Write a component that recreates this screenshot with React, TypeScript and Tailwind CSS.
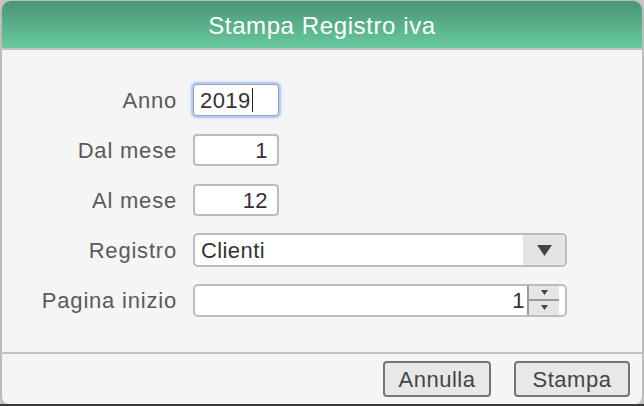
const FONT = { fontFamily: '"Liberation Sans", Arial, sans-serif' };

function Label({ children }: { children: string }) {
  return (
    <div className="w-[191px] pr-[16px] text-right text-[22px] tracking-[0.8px] text-[#5a5a5a]">{children}</div>
  );
}

function Row({ label, children }: { label: string; children: React.ReactNode }) {
  return (
    <div className="flex h-[50px] items-center">
      <Label>{label}</Label>
      {children}
    </div>
  );
}

function Caret() {
  return (
    <svg width="7" height="5" viewBox="0 0 7 5">
      <path d="M0 0 H7 L3.5 5 Z" fill="#444" />
    </svg>
  );
}

export default function App() {
  return (
    <div className="flex h-[406px] w-[644px] flex-col bg-[#c6c6c6]" style={FONT}>
      <div className="flex h-[404px] flex-col overflow-hidden rounded-t-[10px] rounded-b-[8px] border-x-2 border-t border-[#bdbdbd] bg-[#f5f5f5]">
        <div className="flex h-[47px] items-center justify-center bg-gradient-to-b from-[#4a9675] to-[#68c99e] pt-[2px] text-[24px] tracking-[0.6px] text-white">
          Stampa Registro iva
        </div>
        <div className="h-[2px] bg-[#c2c2c2]" />

        <div className="flex h-[302px] flex-col pt-[25px] text-[22px] tracking-[0.4px] text-[#333]">
          <Row label="Anno">
            <div className="flex h-[32px] w-[86px] items-center rounded-[4px] border border-[#9aa4b3] bg-white pl-[6px] shadow-[0_0_0_2px_#b5cdf0,0_0_4px_2px_#c9dbf5]">
              2019<span className="ml-[1px] h-[24px] w-[1px] bg-[#222]" />
            </div>
          </Row>
          <Row label="Dal mese">
            <div className="flex h-[32px] w-[86px] items-center justify-end rounded-[4px] border-2 border-[#bcbcbc] bg-white pr-[9px]">
              1
            </div>
          </Row>
          <Row label="Al mese">
            <div className="flex h-[32px] w-[86px] items-center justify-end rounded-[4px] border-2 border-[#bcbcbc] bg-white pr-[9px]">
              12
            </div>
          </Row>
          <Row label="Registro">
            <div className="flex h-[34px] w-[374px] items-stretch overflow-hidden rounded-[5px] border-2 border-[#bcbcbc] bg-white">
              <div className="flex flex-1 items-center pl-[6px]">Clienti</div>
              <div className="flex w-[42px] items-center justify-center bg-[#e4e4e4]">
                <svg width="15" height="11" viewBox="0 0 15 11">
                  <path d="M0 0 H15 L7.5 11 Z" fill="#444" />
                </svg>
              </div>
            </div>
          </Row>
          <Row label="Pagina inizio">
            <div className="flex h-[33px] w-[374px] items-stretch rounded-[5px] border-2 border-[#bcbcbc] bg-white">
              <div className="flex flex-1 items-center justify-end pr-[2px]">1</div>
              <div className="flex w-[32px] flex-col border-l-2 border-[#9a9a9a] bg-[#e6e6e6]">
                <div className="flex flex-1 items-center justify-center border-b-2 border-[#9a9a9a]">
                  <Caret />
                </div>
                <div className="flex flex-1 items-center justify-center">
                  <Caret />
                </div>
              </div>
              <div className="w-[6px]" />
            </div>
          </Row>
        </div>

        <div className="h-[2px] bg-[#c2c2c2]" />
        <div className="flex flex-1 items-start justify-end gap-[23px] pr-[12px] pt-[7px]">
          <button className="flex h-[36px] w-[108px] items-center justify-center rounded-[4px] border-2 border-[#767676] bg-[#e8e8e8] text-[22px] tracking-[0.5px] text-[#444]">
            Annulla
          </button>
          <button className="flex h-[36px] w-[116px] items-center justify-center rounded-[4px] border-2 border-[#767676] bg-[#e8e8e8] text-[22px] tracking-[0.5px] text-[#444]">
            Stampa
          </button>
        </div>
      </div>
      <div className="flex-1 bg-[#3a3a3a]" />
    </div>
  );
}
